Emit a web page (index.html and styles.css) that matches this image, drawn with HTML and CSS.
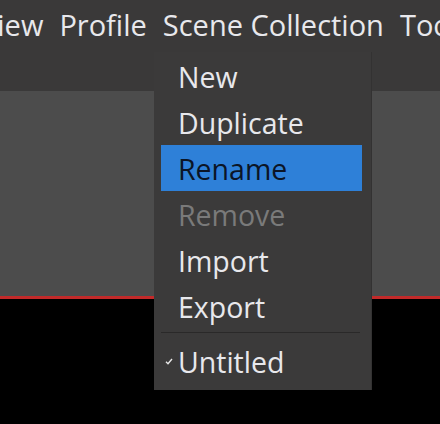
FILE: index.html
```html
<!DOCTYPE html>
<html>
<head>
<meta charset="utf-8">
<link rel="stylesheet" href="styles.css">
</head>
<body>
<div class="app">
  <div class="topbar">
    <nav class="menubar">
      <span class="mb-item">View</span>
      <span class="mb-item">Profile</span>
      <span class="mb-item">Scene Collection</span>
      <span class="mb-item">Tools</span>
    </nav>
  </div>
  <div class="panel"></div>
  <div class="preview"></div>

  <div class="menu">
    <div class="item">New</div>
    <div class="item">Duplicate</div>
    <div class="item active">Rename</div>
    <div class="item disabled">Remove</div>
    <div class="item">Import</div>
    <div class="item">Export</div>
    <div class="sep"></div>
    <div class="item checked"><svg class="check" width="8" height="7" viewBox="0 0 8 7"><path d="M1 3.8 L3 5.8 L7 1" fill="none" stroke="#e8e8e8" stroke-width="1.4"/></svg>Untitled</div>
  </div>
</div>
</body>
</html>
```
FILE: styles.css
```css
html, body {
  margin: 0;
  padding: 0;
  background: #000;
}
.app {
  position: relative;
  width: 440px;
  height: 424px;
  overflow: hidden;
  font-family: "Open Sans", "Noto Sans", sans-serif;
  font-size: 28.5px;
  color: #e8e8ec;
}
.topbar {
  height: 91px;
  background: #3a3939;
}
.menubar {
  display: flex;
  gap: 16px;
  margin-left: -20px;
  white-space: nowrap;
  font-size: 29px;
  line-height: 38px;
  padding-top: 6px;
}
.panel {
  height: 205px;
  background: #4c4c4c;
  border-bottom: 3px solid #c22a2a;
}
.preview {
  height: 125px;
  background: #000;
}
.menu {
  position: absolute;
  left: 154px;
  top: 52px;
  width: 218px;
  box-sizing: border-box;
  padding: 1px 9px 6px 7px;
  background: #3b3a3a;
  border-right: 1px solid #333232;
}
.item {
  position: relative;
  height: 46px;
  line-height: 46px;
  padding-left: 17px;
  padding-top: 1px;
  box-sizing: border-box;
}
.item.active {
  background: #2e80d8;
  color: #0b1526;
}
.item.disabled {
  color: #7a7a7a;
}
.sep {
  height: 1px;
  background: #2a2929;
  margin: 3px 2px 5px 0;
}
.check {
  position: absolute;
  left: 4px;
  top: 20px;
}
```
